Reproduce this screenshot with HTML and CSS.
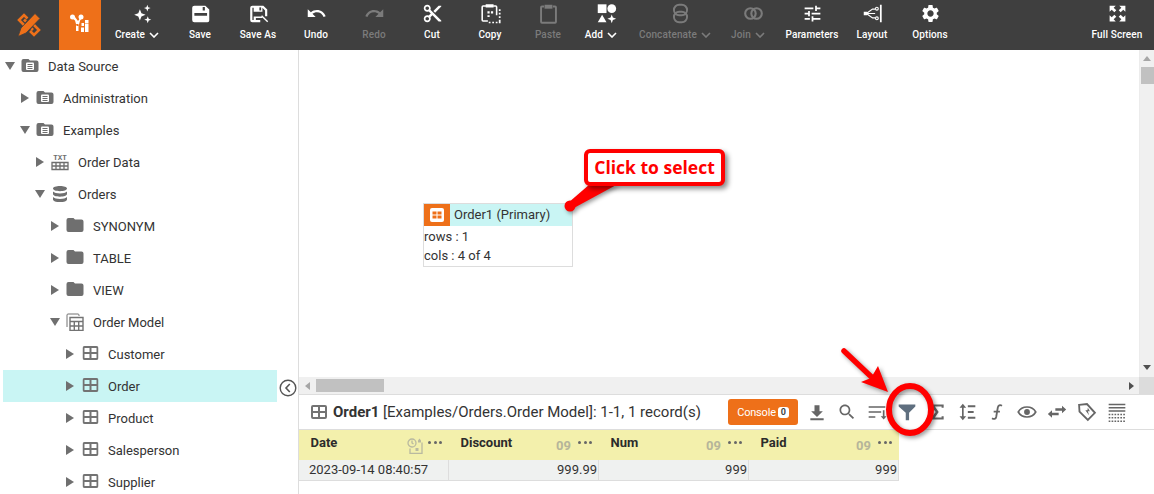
FILE: index.html
```html
<!DOCTYPE html>
<html lang="en">
<head>
<meta charset="utf-8">
<title>Data Worksheet</title>
<link rel="stylesheet" href="styles.css">
</head>
<body>
<svg class="defs" width="0" height="0" aria-hidden="true">
  <symbol id="i-dbfolder" viewBox="0 0 18 16"><path fill="#6f6f6f" d="M2.500 1h5l1.500 1.500h6.500a2 2 0 0 1 2 2V12a2 2 0 0 1-2 2h-13a2 2 0 0 1-2-2V3a2 2 0 0 1 2-2z"/><rect x="5" y="4.500" width="8" height="7.500" rx="1" fill="#fff"/><path fill="#6f6f6f" d="M6.500 6h5v1.100h-5zM6.500 8h5v1.100h-5zM6.500 10h5v1h-5z"/></symbol>
  <symbol id="i-folder" viewBox="0 0 18 16"><path fill="#6f6f6f" d="M2.500 0h5L9 1.500h6.500a2 2 0 0 1 2 2V12a2 2 0 0 1-2 2h-13a2 2 0 0 1-2-2V2a2 2 0 0 1 2-2z"/></symbol>
  <symbol id="i-table" viewBox="0 0 16 16"><path fill="none" stroke="#737373" stroke-width="2" d="M2 2h12a1 1 0 0 1 1 1v10a1 1 0 0 1-1 1H2a1 1 0 0 1-1-1V3a1 1 0 0 1 1-1zM8 2v12M1 8h14"/></symbol>
  <symbol id="i-model" viewBox="0 0 18 18"><path fill="none" stroke="#737373" stroke-width="1" d="M1 14V2a1 1 0 0 1 1-1h10a1 1 0 0 1 1 1v1"/><path fill="none" stroke="#737373" stroke-width="1.400" d="M4 4.500h13v13H4zM4 8.500h13M8.300 8.500v9M12.700 8.500v9M4 13h13"/></symbol>
  <symbol id="i-db" viewBox="0 0 16 16"><path fill="#6f6f6f" d="M8 0c4 0 7 1 7 2.600S12 5.200 8 5.200 1 4.200 1 2.600 4 0 8 0zM1 5.500c1 1.300 4 1.900 7 1.900s6-.6 7-1.900v2.600C15 9.700 12 10.700 8 10.700S1 9.700 1 8.100zM1 11c1 1.300 4 1.900 7 1.900s6-.6 7-1.900v2.400C15 15 12 16 8 16s-7-1-7-2.600z"/></symbol>
  <symbol id="i-chev" viewBox="0 0 10 6"><path fill="none" stroke="currentColor" stroke-width="1.600" d="M1 1l4 4 4-4"/></symbol>
</svg>

<header class="toolbar">
  <div class="brand">
    <svg width="24" height="24" viewBox="0 0 24 24"><g fill="none" stroke="#ee7019" stroke-width="2.600"><path d="M10.500 5.500L7 2 2 7l5.500 5.500M7 6.500l2 2"/><path d="M13 18l4 4 5-5-5.500-5.500M16 17l-1.500-1.500"/></g><path fill="#ee7019" stroke="#3f3f3f" stroke-width=".8" d="M18 .5l5 5L9 20l-8 3.500L4 15z"/></svg>
  </div>
  <div class="brand-app">
    <svg width="20" height="20" viewBox="0 0 20 20"><g fill="#fff"><circle cx="2.500" cy="3" r="2.500"/><circle cx="11" cy="3" r="2.500"/><path d="M2 4l3 2.500 1.600 5.500h2l1.500-5.500L12 4l-1-1-3 4-3-4zM6 10h2.500v7H6zM11.500 9H14v3h-2.500zM15 6h3.500v3H15zM15 9.500h3.500V18H15zM11 13.500h3V18h-3z"/></g></svg>
  </div>
  <div class="tools">
    <div class="tool"><span class="ticon"><svg viewBox="0 0 24 24" fill="#fff"><path d="M9 7l1.800 4.700 4.700 1.800-4.700 1.800L9 20l-1.800-4.700-4.700-1.800 4.700-1.800zM17.500 2l1 2.800 2.800 1-2.800 1-1 2.800-1-2.800-2.800-1 2.800-1zM18 15l1.100 2.900 2.900 1.100-2.900 1.100L18 23l-1.100-2.900-2.900-1.100 2.900-1.100z"/></svg></span><span class="tlabel has-chev">Create<svg class="chev" width="10" height="6"><use href="#i-chev"/></svg></span></div>
    <div class="tool"><span class="ticon"><svg viewBox="0 0 24 24"><path fill="#fff" d="M5 3h12.500L22 7.500V20a2 2 0 0 1-2 2H5a2.500 2.500 0 0 1-2.500-2.500V5.500A2.500 2.500 0 0 1 5 3z"/><path fill="#3f3f3f" d="M5 11.500h14.500v3H5zM14.500 4.500h2.500v4h-2.500z"/></svg></span><span class="tlabel">Save</span></div>
    <div class="tool"><span class="ticon"><svg viewBox="0 0 24 24"><path fill="#fff" d="M5 3h12.500L22 7.500V15h-2.500V8.500L16.500 5.500H5v14h9V22H5a2.500 2.500 0 0 1-2.500-2.500V5.500A2.500 2.500 0 0 1 5 3zM6.500 4h10v6h-10zM6.500 15.500h9l1.500 1.500H9v3H6.500z"/><path fill="#3f3f3f" d="M13 5h2v3.500h-2z"/><path stroke="#fff" stroke-width="1.600" d="M15.500 14.500l7 7"/></svg></span><span class="tlabel">Save As</span></div>
    <div class="tool"><span class="ticon"><svg viewBox="0 0 24 24"><path fill="#fff" d="M12.500 8c-2.650 0-5.050.99-6.900 2.600L2 7v9h9l-3.620-3.620c1.390-1.160 3.160-1.880 5.120-1.880 3.540 0 6.550 2.310 7.600 5.500l2.370-.78C21.080 11.030 17.150 8 12.500 8z"/></svg></span><span class="tlabel">Undo</span></div>
    <div class="tool off"><span class="ticon"><svg viewBox="0 0 24 24"><path fill="#7b7b7b" d="M18.400 10.600C16.550 8.990 14.150 8 11.500 8c-4.650 0-8.580 3.030-9.960 7.220L3.900 16c1.050-3.190 4.050-5.500 7.600-5.500 1.950 0 3.730.72 5.120 1.880L13 16h9V7l-3.600 3.600z"/></svg></span><span class="tlabel">Redo</span></div>
    <div class="tool"><span class="ticon"><svg viewBox="0 0 24 24"><path fill="#fff" d="M9.640 7.640c.23-.5.36-1.050.36-1.640 0-2.210-1.790-4-4-4S2 3.790 2 6s1.790 4 4 4c.59 0 1.140-.13 1.640-.36L10 12l-2.360 2.360C7.140 14.130 6.590 14 6 14c-2.210 0-4 1.790-4 4s1.790 4 4 4 4-1.790 4-4c0-.59-.13-1.140-.36-1.640L12 14l7 7h3v-1L9.640 7.640zM6 8c-1.100 0-2-.89-2-2s.9-2 2-2 2 .89 2 2-.9 2-2 2zm0 12c-1.100 0-2-.89-2-2s.9-2 2-2 2 .89 2 2-.9 2-2 2zM19 3l-6 6 2 2 7-7V3z"/></svg></span><span class="tlabel">Cut</span></div>
    <div class="tool"><span class="ticon"><svg viewBox="0 0 24 24"><path fill="none" stroke="#fff" stroke-width="1.800" d="M7 3.500H3.500a1 1 0 0 0-1 1v15a1 1 0 0 0 1 1H9M15 3.500h3a1 1 0 0 1 1 1V14"/><path fill="#fff" d="M6.500 1.500h9V5h-9zM8.500 9.500h2.500V12H8.500zM12.500 9.500H15V12h-2.500zM8.500 14H11v2H8.500zM21.500 7h2v2h-2zM21.500 11h2v2h-2zM21.500 15h2v2h-2zM10 21.500h2V23h-2zM14 21.500h2V23h-2zM18 21.500h2V23h-2zM21.500 19h2v4h-2z"/></svg></span><span class="tlabel">Copy</span></div>
    <div class="tool off"><span class="ticon"><svg viewBox="0 0 24 24"><path fill="none" stroke="#7b7b7b" stroke-width="2.200" d="M7 4H4.500a1 1 0 0 0-1 1v16.500a1 1 0 0 0 1 1h15a1 1 0 0 0 1-1V5a1 1 0 0 0-1-1H17"/><path fill="#7b7b7b" d="M7.500 2h9v4.500h-9z"/></svg></span><span class="tlabel">Paste</span></div>
    <div class="tool"><span class="ticon"><svg viewBox="0 0 24 24" fill="#fff"><path d="M2 1.500h10v10H2z"/><circle cx="18" cy="6.500" r="5"/><path d="M7 13.500l5 8.500H2zM18 13l1.300 3.700 3.700 1.300-3.700 1.300L18 23l-1.300-3.700-3.700-1.300 3.700-1.300z"/></svg></span><span class="tlabel has-chev">Add<svg class="chev" width="10" height="6"><use href="#i-chev"/></svg></span></div>
    <div class="tool off wide"><span class="ticon"><svg viewBox="0 0 24 24"><g fill="none" stroke="#7b7b7b" stroke-width="2.200"><rect x="4.500" y="2" width="15" height="12" rx="6"/><rect x="4.500" y="10" width="15" height="12" rx="6"/></g></svg></span><span class="tlabel has-chev">Concatenate<svg class="chev" width="10" height="6"><use href="#i-chev"/></svg></span></div>
    <div class="tool off join"><span class="ticon"><svg viewBox="0 0 24 24"><g fill="none" stroke="#7b7b7b" stroke-width="2.400"><circle cx="8.500" cy="12" r="6"/><circle cx="15.500" cy="12" r="6"/></g></svg></span><span class="tlabel has-chev">Join<svg class="chev" width="10" height="6"><use href="#i-chev"/></svg></span></div>
    <div class="tool params"><span class="ticon"><svg viewBox="0 0 24 24"><path fill="#fff" d="M3 17v2h6v-2H3zM3 5v2h10V5H3zm10 16v-2h8v-2h-8v-2h-2v6h2zM7 9v2H3v2h4v2h2V9H7zm14 4v-2H11v2h10zm-6-4h2V7h4V5h-4V3h-2v6z"/></svg></span><span class="tlabel">Parameters</span></div>
    <div class="tool"><span class="ticon"><svg viewBox="0 0 24 24"><g fill="none" stroke="#fff" stroke-width="1.300"><path d="M5 12l7-5h3M5 12l7 5h3M5 12h10"/><circle cx="17" cy="6.500" r="1.600"/><circle cx="17" cy="17.500" r="1.600"/></g><path fill="#fff" d="M20.500 2h2v20h-2zM2 10h4v4H2z"/></svg></span><span class="tlabel">Layout</span></div>
    <div class="tool"><span class="ticon"><svg viewBox="0 0 24 24"><path fill="#fff" d="M19.140 12.940c.04-.3.06-.61.06-.94 0-.32-.02-.64-.07-.94l2.030-1.580c.18-.14.23-.41.12-.61l-1.920-3.320c-.12-.22-.37-.29-.59-.22l-2.390.96c-.5-.38-1.030-.7-1.620-.94l-.36-2.540c-.04-.24-.24-.41-.48-.41h-3.840c-.24 0-.43.17-.47.41l-.36 2.540c-.59.24-1.130.57-1.620.94l-2.390-.96c-.22-.08-.47 0-.59.22L2.740 8.870c-.12.21-.08.47.12.61l2.030 1.580c-.05.3-.09.63-.09.94s.02.64.07.94l-2.030 1.580c-.18.14-.23.41-.12.61l1.920 3.320c.12.22.37.29.59.22l2.390-.96c.5.38 1.030.7 1.620.94l.36 2.540c.05.24.24.41.48.41h3.840c.24 0 .44-.17.47-.41l.36-2.540c.59-.24 1.130-.56 1.620-.94l2.390.96c.22.08.47 0 .59-.22l1.920-3.320c.12-.22.07-.47-.12-.61l-2.010-1.580zM12 15.600c-1.980 0-3.600-1.620-3.600-3.600s1.620-3.600 3.600-3.600 3.600 1.620 3.600 3.600-1.620 3.600-3.600 3.600z"/></svg></span><span class="tlabel">Options</span></div>
    <div class="tool full"><span class="ticon"><svg viewBox="0 0 24 24"><path fill="#fff" d="M3 3h7l-2.400 2.400 3 3-2.200 2.200-3-3L3 10zM21 3v7l-2.400-2.400-3 3-2.200-2.200 3-3L14 3zM3 21v-7l2.400 2.400 3-3 2.200 2.200-3 3L10 21zM21 21h-7l2.400-2.400-3-3 2.200-2.200 3 3L21 14z"/></svg></span><span class="tlabel">Full Screen</span></div>
  </div>
</header>

<div class="workspace">
  <aside class="sidebar">
    <div class="row l0"><span class="caret down"></span><svg class="nicon" width="18" height="16"><use href="#i-dbfolder"/></svg><span>Data Source</span></div>
    <div class="row l1"><span class="caret"></span><svg class="nicon" width="18" height="16"><use href="#i-dbfolder"/></svg><span>Administration</span></div>
    <div class="row l1"><span class="caret down"></span><svg class="nicon" width="18" height="16"><use href="#i-dbfolder"/></svg><span>Examples</span></div>
    <div class="row l2"><span class="caret"></span><svg class="nicon" width="18" height="18" viewBox="0 0 18 18"><text class="txt-glyph" x="9" y="7" text-anchor="middle">TXT</text><path fill="none" stroke="#6f6f6f" stroke-width="1.300" d="M1 9.500h16v7H1zM1 13h16M5 9.500v7M9 9.500v7M13 9.500v7"/></svg><span>Order Data</span></div>
    <div class="row l2"><span class="caret down"></span><svg class="nicon" width="18" height="16"><use href="#i-db"/></svg><span>Orders</span></div>
    <div class="row l3"><span class="caret"></span><svg class="nicon" width="18" height="16"><use href="#i-folder"/></svg><span>SYNONYM</span></div>
    <div class="row l3"><span class="caret"></span><svg class="nicon" width="18" height="16"><use href="#i-folder"/></svg><span>TABLE</span></div>
    <div class="row l3"><span class="caret"></span><svg class="nicon" width="18" height="16"><use href="#i-folder"/></svg><span>VIEW</span></div>
    <div class="row l3"><span class="caret down"></span><svg class="nicon" width="18" height="18"><use href="#i-model"/></svg><span>Order Model</span></div>
    <div class="row l4"><span class="caret"></span><svg class="nicon" width="18" height="16"><use href="#i-table" x="1.500" y="-1" width="16" height="16"/></svg><span>Customer</span></div>
    <div class="row l4 selected"><span class="caret"></span><svg class="nicon" width="18" height="16"><use href="#i-table" x="1.500" y="-1" width="16" height="16"/></svg><span>Order</span></div>
    <div class="row l4"><span class="caret"></span><svg class="nicon" width="18" height="16"><use href="#i-table" x="1.500" y="-1" width="16" height="16"/></svg><span>Product</span></div>
    <div class="row l4"><span class="caret"></span><svg class="nicon" width="18" height="16"><use href="#i-table" x="1.500" y="-1" width="16" height="16"/></svg><span>Salesperson</span></div>
    <div class="row l4"><span class="caret"></span><svg class="nicon" width="18" height="16"><use href="#i-table" x="1.500" y="-1" width="16" height="16"/></svg><span>Supplier</span></div>
    <svg class="collapse" width="18" height="18" viewBox="0 0 18 18"><circle cx="9" cy="9" r="7.800" fill="#fff" stroke="#555" stroke-width="1.400"/><path fill="none" stroke="#555" stroke-width="1.600" d="M10.800 5L7 9l3.800 4"/></svg>
  </aside>

  <main class="main">
    <div class="canvas-row">
      <div class="canvas">
        <div class="node">
          <div class="node-head">
            <span class="node-badge"><svg width="14" height="14" viewBox="0 0 14 14"><rect width="14" height="14" rx="2" fill="#fff"/><path fill="#ee7019" d="M2.500 3.500h4v3h-4zM7.500 3.500h4v3h-4zM2.500 7.500h4v3h-4zM7.500 7.500h4v3h-4z"/></svg></span>
            <span class="node-title">Order1 (Primary)</span>
          </div>
          <div class="node-line">rows : 1</div>
          <div class="node-line">cols : 4 of 4</div>
        </div>
      </div>
      <div class="vscroll">
        <span class="arrow up"></span>
        <span class="vthumb"></span>
        <span class="arrow dn"></span>
      </div>
    </div>
    <div class="hscroll">
      <span class="arrow lf"></span>
      <span class="hthumb"></span>
      <span class="arrow rt"></span>
      <span class="corner"></span>
    </div>
    <div class="panel-head">
      <svg class="panel-icon" width="16" height="16"><use href="#i-table"/></svg>
      <div class="panel-title"><b>Order1</b> [Examples/Orders.Order Model]: 1-1, 1 record(s)</div>
      <div class="console">Console<span class="badge">0</span></div>
      <div class="actions">
        <svg width="20" height="20" viewBox="0 0 24 24"><path fill="#666" d="M15 4v7h4l-7 7-7-7h4V4zM4 19.500h16V22H4z"/></svg>
        <svg width="20" height="20" viewBox="0 0 24 24"><path fill="#666" d="M15.500 14h-.79l-.28-.27C15.410 12.590 16 11.110 16 9.500 16 5.910 13.090 3 9.500 3S3 5.910 3 9.500 5.910 16 9.500 16c1.610 0 3.090-.59 4.230-1.570l.27.28v.79l5 4.990L20.490 19l-4.990-5zm-6 0C7.010 14 5 11.990 5 9.500S7.010 5 9.500 5 14 7.010 14 9.500 11.990 14 9.500 14z"/></svg>
        <svg width="20" height="20" viewBox="0 0 24 24"><path fill="#666" d="M2 5h20v2H2zM2 11h15v2H2zM2 17h8v2H2zM19 10h2v7h2.500L20 21l-3.500-4H19z"/></svg>
        <svg width="20" height="20" viewBox="0 0 24 24"><path fill="#5f6f7f" d="M2 3h20v2.500L14.500 13v9h-4v-9L2 5.500z"/></svg>
        <svg width="20" height="20" viewBox="0 0 24 24"><path fill="#666" d="M5 3h15v4h-2.500V5.500H9.500L14 12l-4.500 6.500h8V17H20v4H5v-2l5.500-7L5 5z"/></svg>
        <svg width="20" height="20" viewBox="0 0 24 24"><path fill="#666" d="M7 2l4 5H8v10h3l-4 5-4-5h3V7H3zM13 4h9v2.200h-9zM13 10.900h7v2.200h-7zM13 17.800h9V20h-9z"/></svg>
        <svg width="20" height="20" viewBox="0 0 24 24"><path fill="none" stroke="#666" stroke-width="2.200" d="M18 4.500c-2.500-1.500-4.500-.5-5 2L11 18c-.5 2.500-2.500 3-5 1.500M8 11.500h7.500"/></svg>
        <svg width="20" height="20" viewBox="0 0 24 24"><path fill="none" stroke="#666" stroke-width="2" d="M1.500 12C4 7.500 8 6 12 6s8 1.500 10.500 6C20 16.500 16 18 12 18s-8-1.500-10.500-6z"/><circle cx="12" cy="12" r="3.500" fill="#666"/></svg>
        <svg width="20" height="20" viewBox="0 0 24 24"><path fill="#666" d="M10 7.500h8V4.500l5 4.500-5 4.500v-3h-8zM14 13H6v-3l-5 4.500L6 19v-3h8z"/></svg>
        <svg width="20" height="20" viewBox="0 0 24 24"><path fill="none" stroke="#666" stroke-width="2.200" d="M2.500 3.500L12 2.500l9.500 10.500-8.500 8.500-10-10z"/><path fill="#666" d="M13 7l2.500 4H13l1.500 5-4.500-6h2.500z"/></svg>
        <svg width="20" height="20" viewBox="0 0 24 24"><path fill="#666" d="M2 2h20v1.800H2zM2 6h20v1.800H2zM2 10h20v1.800H2z"/><path fill="none" stroke="#666" stroke-width="1.800" stroke-dasharray="2 1.500" d="M2 15h20M2 19h20M2 23h20"/></svg>
      </div>
    </div>
    <div class="grid">
      <div class="hcell"><span class="hname">Date</span><svg class="dtype" width="16" height="16" viewBox="0 0 16 16"><g fill="none" stroke="#b9b9a0" stroke-width="1.300"><circle cx="5" cy="5" r="4"/><path d="M5 2.500V5l1.500 1M3 10.500V15.300h12V4.500"/></g><path fill="#b9b9a0" d="M11 2.500l1.500-2 1.500 2v2h-3zM8.500 10h3v3h-3z"/></svg><span class="dots"><i></i><i></i><i></i></span></div>
      <div class="hcell"><span class="hname">Discount</span><span class="ntype">09</span><span class="dots"><i></i><i></i><i></i></span></div>
      <div class="hcell"><span class="hname">Num</span><span class="ntype">09</span><span class="dots"><i></i><i></i><i></i></span></div>
      <div class="hcell"><span class="hname">Paid</span><span class="ntype">09</span><span class="dots"><i></i><i></i><i></i></span></div>
      <div class="cell">2023-09-14 08:40:57</div>
      <div class="cell num">999.99</div>
      <div class="cell num">999</div>
      <div class="cell num">999</div>
    </div>
  </main>
</div>

<svg class="marks" width="1154" height="494" viewBox="0 0 1154 494" aria-hidden="true">
  <g class="mark-shadow" fill="#f00">
    <path d="M590 184h28l-46 25-4-6z"/>
    <circle cx="570" cy="206" r="5.500"/>
    <path d="M844 351l37 35" stroke="#f00" stroke-width="5.500" stroke-linecap="round" fill="none"/>
    <path d="M888 392l-27-10 10-4 7-12z"/>
    <ellipse cx="910" cy="409.500" rx="21" ry="23.500" fill="none" stroke="#f00" stroke-width="6"/>
  </g>
</svg>
<div class="callout">Click to select</div>
</body>
</html>
```
FILE: styles.css
```css
* { box-sizing: border-box; }
html, body { margin: 0; height: 100%; }
body {
  position: relative;
  width: 1154px;
  height: 494px;
  overflow: hidden;
  display: flex;
  flex-direction: column;
  font-family: Roboto, "Liberation Sans", sans-serif;
  font-size: 13px;
  color: #333;
  background: #fff;
}
.defs { position: absolute; }

.toolbar { display: flex; height: 50px; flex: none; background: #3f3f3f; color: #fff; }
.brand { width: 59px; display: flex; align-items: center; justify-content: center; padding-right: 1px; }
.brand-app { width: 42px; background: #ee7019; display: flex; align-items: center; justify-content: center; padding-bottom: 3px; }
.tools { flex: 1; display: flex; padding-left: 12px; }
.tool { width: 58px; display: flex; flex-direction: column; align-items: center; padding-top: 1px; }
.tool.wide { width: 90px; }
.tool.join { width: 56px; }
.tool.params { width: 62px; }
.tool.full { width: 74px; margin-left: auto; }
.tool.off { color: #7b7b7b; }
.ticon { height: 24px; display: block; }
.ticon svg { display: block; width: 21px; height: 21px; margin-top: 2px; }
.tlabel { margin-top: 3px; font-size: 10px; letter-spacing: .12px; font-weight: 500; line-height: 14px; white-space: nowrap; display: flex; align-items: center; }
.tlabel.has-chev { padding-right: 10px; }
.chev { margin-left: 4px; }

.workspace { flex: 1; display: flex; min-height: 0; }
.sidebar { position: relative; width: 299px; flex: none; padding: 0 21px 0 3px; border-right: 1px solid #ddd; overflow: hidden; }
.row { display: flex; align-items: center; height: 32px; flex: none; white-space: nowrap; }
.row.l0 { padding-left: 2px; }
.row.l1 { padding-left: 17px; }
.row.l2 { padding-left: 32px; }
.row.l3 { padding-left: 47px; }
.row.l4 { padding-left: 62px; }
.row.selected { background: #c9f5f4; }
.caret { width: 10px; height: 10px; flex: none; margin-right: 6px; position: relative; }
.caret::before { content: ""; position: absolute; left: 1px; top: 0; border-style: solid; border-width: 5px 0 5px 8px; border-color: transparent transparent transparent #6f6f6f; }
.caret.down::before { left: 0; top: 1px; border-width: 8px 5px 0 5px; border-color: #6f6f6f transparent transparent transparent; }
.nicon { flex: none; margin-right: 9px; }
.txt-glyph { font-family: "Liberation Mono", monospace; font-size: 7.500px; font-weight: 700; fill: #6f6f6f; }
.collapse { position: absolute; left: 279px; top: 329px; }

.main { flex: 1; min-width: 0; display: flex; flex-direction: column; }
.canvas-row { height: 327px; flex: none; display: flex; }
.canvas { flex: 1; position: relative; }
.node { position: absolute; left: 124px; top: 153px; width: 150px; height: 64px; border: 1px solid #ddd; background: #fff; }
.node-head { display: flex; height: 22px; background: #c9f5f4; margin-bottom: 1px; }
.node-badge { width: 26px; background: #ee7019; display: flex; align-items: center; justify-content: center; }
.node-title { margin-left: 4px; line-height: 21px; }
.node-line { line-height: 19px; }

.vscroll { position: relative; width: 15px; background: #f0f0f0; border-left: 1px solid #ececec; display: flex; flex-direction: column; align-items: center; }
.vthumb { position: absolute; left: 1px; top: 17px; width: 13px; height: 17px; background: #c1c1c1; }
.arrow { position: absolute; width: 0; height: 0; border-style: solid; border-color: transparent; }
.arrow.up { top: 6px; left: 3px; border-width: 0 4px 5px; border-bottom-color: #a6a6a6; }
.arrow.dn { bottom: 7px; left: 3px; border-width: 5px 4px 0; border-top-color: #505050; }

.hscroll { position: relative; height: 18px; flex: none; background: #f0f0f0; border-bottom: 1px solid #ddd; }
.hthumb { position: absolute; left: 17px; top: 2px; width: 68px; height: 13px; background: #c1c1c1; }
.arrow.lf { left: 6px; top: 5px; border-width: 4px 5px 4px 0; border-right-color: #a6a6a6; }
.arrow.rt { right: 20px; top: 5px; border-width: 4px 0 4px 5px; border-left-color: #505050; }
.corner { position: absolute; right: 0; top: 0; width: 15px; height: 17px; background: #dcdcdc; }

.panel-head { height: 35px; flex: none; display: flex; align-items: center; padding-left: 12px; border-bottom: 1px solid #ddd; }
.panel-icon { flex: none; margin-right: 6px; }
.panel-title { width: 395px; font-size: 15px; white-space: nowrap; }
.panel-title b { font-weight: 700; }
.console { width: 70px; height: 26px; border-radius: 3px; background: #ee7019; color: #fff; font-size: 11px; letter-spacing: -.2px; display: flex; align-items: center; justify-content: center; }
.badge { margin-left: 2px; width: 11px; height: 11px; border-radius: 3px; background: #fff; color: #444; font-size: 9px; font-weight: 700; line-height: 11px; text-align: center; }
.actions { margin-left: 9px; display: flex; gap: 10px; align-items: center; }
.actions svg { flex: none; }

.grid { display: grid; grid-template-columns: repeat(4, 150px); width: 600px; }
.hcell { height: 30px; background: #f3f0ac; display: flex; align-items: center; padding: 0 7px 5px 11.500px; }
.hname { flex: 1; font-size: 13px; font-weight: 700; color: #2b2b2b; }
.ntype { font-size: 13px; font-weight: 700; color: #b5b59a; margin-right: 7px; position: relative; top: 3px; }
.dtype { margin-right: 5px; position: relative; top: 3px; }
.dots { display: flex; gap: 2.500px; }
.dots i { width: 3px; height: 3px; border-radius: 50%; background: #666; }
.cell { height: 21px; background: #eff1f0; border-right: 1px solid #ddd; border-bottom: 1px solid #ddd; padding: 0 1px 0 10px; line-height: 20px; white-space: nowrap; }
.cell.num { text-align: right; }

.marks { position: absolute; left: 0; top: 0; pointer-events: none; }
.mark-shadow { filter: drop-shadow(2px 2px 2px rgba(0,0,0,.4)); }
.callout {
  position: absolute; left: 584px; top: 149px; width: 141px; height: 37px;
  border: 4px solid #f00; border-radius: 6px; background: #fff;
  box-shadow: 3px 3px 5px rgba(0,0,0,.45);
  color: #f00; font-family: "Open Sans", sans-serif; font-size: 17.500px; font-weight: 700;
  line-height: 29px; text-align: center; white-space: nowrap;
}
```
